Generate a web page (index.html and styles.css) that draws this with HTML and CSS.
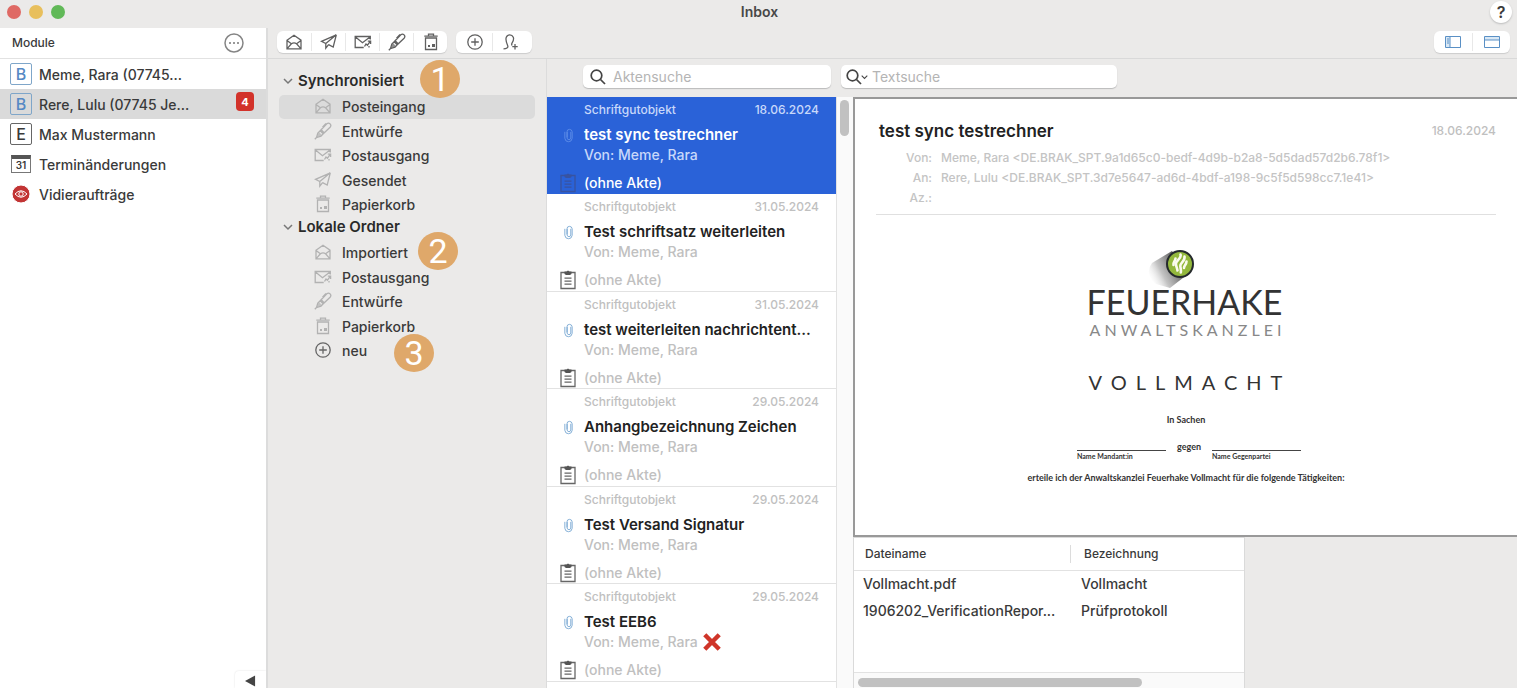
FILE: index.html
```html
<!DOCTYPE html>
<html lang="de">
<head>
<meta charset="utf-8">
<title>Inbox</title>
<link rel="stylesheet" href="styles.css">
</head>
<body>
<svg class="sprite" aria-hidden="true">
  <symbol id="i-inbox" viewBox="0 0 18 18"><path d="M2 7.200 9 2.200l7 5v8.600H2zM2 7.500l4.400 3.300M16 7.500l-4.400 3.300M2.200 15.600l4.200-4.800q2.600-2 5.200 0l4.200 4.800"/></symbol>
  <symbol id="i-send" viewBox="0 0 18 18"><path d="M16.300 1.800 1.500 8.300l4.300 2.200zM16.300 1.800 13.200 14l-4.600-2.300M16.300 1.800 5.800 10.500v4.700l2.800-3.500"/></symbol>
  <symbol id="i-out" viewBox="0 0 18 18"><path d="M16.300 6.500V3.500H1.200v11h8.500M1.200 3.700l7.300 6 7.800-6M10.500 13.500l1.500-2.500 1.400 1.200 3-4M13.800 8.200h2.800v2.800M15 14.500v-1.500"/></symbol>
  <symbol id="i-pen" viewBox="0 0 18 18"><path d="m6.200 8.800 6.600-7q1.700-1.400 3.300.1 1.500 1.700 0 3.300L9.200 11.800zM6.200 8.800 3.800 11l-1.300 4.500L7 14.200l2.200-2.400M7.200 7.700 9.800 10.500M2.500 15.500.8 17.200M8.500 5.200 12 1.500"/><path class="solid" d="m5.200 10.300 2.600 2.600-1.200 1.200-3.700 1.100 1.100-3.700z" opacity=".7"/></symbol>
  <symbol id="i-bin" viewBox="0 0 18 18"><path d="M3.500 5h11v11.500h-11zM2.300 3.200h13.400M6.500 3V1.200h5V3"/><path class="solid" d="M6 12h2v2H6zM10 11h3v3h-3z"/></symbol>
  <symbol id="i-plus" viewBox="0 0 18 18"><circle cx="9" cy="9" r="7.200"/><path d="M9 5.200v7.600M5.200 9h7.600"/></symbol>
  <symbol id="i-user" viewBox="0 0 18 18"><path d="M2.500 15.800c3 0 4.800-1 4.300-2.900C5.500 10 4.200 7 5.300 4.300c1.300-3.300 5.600-3.300 7 0 1 2.600-.3 4.300-1.400 6-.5 1-.3 1.600.3 2.100M14 11v5.400M11.300 13.700h5.400"/></symbol>
  <symbol id="i-chevron" viewBox="0 0 10 10"><path d="m1 3 4 4 4-4"/></symbol>
  <symbol id="i-search" viewBox="0 0 18 18"><circle cx="7.500" cy="7.500" r="5.300"/><path d="m11.500 11.500 4.500 4.500"/></symbol>
  <symbol id="i-clip" viewBox="0 0 12 16"><path d="M8.500 4v6.800q-.3 1.700-2 1.700t-2-1.700V4.200M2 4v7q.4 3.800 4 3.800t4-3.800V4q-.3-2.700-3-2.700T4.400 4v6"/></symbol>
  <symbol id="i-note" viewBox="0 0 18 20"><path d="M2 2.500h14v16H2zM5.500 8.200h7M5.500 11.200h7M5.500 14.200h7"/><path class="solid" d="M5.500 1.500h2L9 .5l1.500 1h2V4l-1.500 1H7L5.500 4z"/></symbol>
</svg>

<div class="window">
  <header class="titlebar">
    <div class="lights"><span class="light red"></span><span class="light yellow"></span><span class="light green"></span></div>
    <h1 class="title">Inbox</h1>
    <button class="help" aria-label="Hilfe">?</button>
  </header>

  <div class="shell">
    <aside class="modules">
      <div class="modules-head">
        <h2>Module</h2>
        <button class="more" aria-label="Mehr"><svg viewBox="0 0 20 20"><circle class="ring" cx="10" cy="10" r="9"/><circle cx="6" cy="10" r="1"/><circle cx="10" cy="10" r="1"/><circle cx="14" cy="10" r="1"/></svg></button>
      </div>
      <ul class="module-list">
        <li class="module"><span class="letter blue">B</span><span class="name">Meme, Rara (07745...</span></li>
        <li class="module active"><span class="letter blue">B</span><span class="name">Rere, Lulu (07745 Je...</span><span class="count">4</span></li>
        <li class="module"><span class="letter">E</span><span class="name">Max Mustermann</span></li>
        <li class="module"><span class="calendar">31</span><span class="name">Terminänderungen</span></li>
        <li class="module"><svg class="eye" viewBox="0 0 22 22"><circle cx="11" cy="11" r="9" fill="#c23434"/><path d="M5 11q6-6.500 12 0-6 6.500-12 0z"/><circle cx="11" cy="11" r="2.200"/></svg><span class="name">Vidieraufträge</span></li>
      </ul>
      <button class="collapse" aria-label="Einklappen"><svg viewBox="0 0 12 12"><path d="M11 0v12L0 6z"/></svg></button>
    </aside>

    <div class="work">
      <div class="toolbar">
        <div class="group">
          <button aria-label="Posteingang"><svg class="icon"><use href="#i-inbox"/></svg></button>
          <button aria-label="Senden"><svg class="icon"><use href="#i-send"/></svg></button>
          <button aria-label="Postausgang"><svg class="icon"><use href="#i-out"/></svg></button>
          <button aria-label="Entwurf"><svg class="icon"><use href="#i-pen"/></svg></button>
          <button aria-label="Papierkorb"><svg class="icon"><use href="#i-bin"/></svg></button>
        </div>
        <div class="group create">
          <button aria-label="Neu"><svg class="icon"><use href="#i-plus"/></svg></button>
          <button aria-label="Kontakt hinzufügen"><svg class="icon"><use href="#i-user"/></svg></button>
        </div>
        <div class="group views">
          <button aria-label="Seitenleiste"><svg class="view" viewBox="0 0 16 12"><path class="tint" d="M1 1h4v10H1z"/><path d="M.5.500h15v11H.5zM5 1v10M2 3h2M2 5h2M2 7h2"/></svg></button>
          <button aria-label="Kopfbereich"><svg class="view" viewBox="0 0 16 12"><path class="tint" d="M1 1h14v3H1z"/><path d="M.5.500h15v11H.5zM1 4h14"/></svg></button>
        </div>
      </div>

      <div class="content">
        <nav class="folders">
          <h3 class="folder-head"><svg class="chev"><use href="#i-chevron"/></svg>Synchronisiert<span class="marker first">1</span></h3>
          <ul>
            <li class="folder active"><svg class="icon"><use href="#i-inbox"/></svg>Posteingang</li>
            <li class="folder"><svg class="icon"><use href="#i-pen"/></svg>Entwürfe</li>
            <li class="folder"><svg class="icon"><use href="#i-out"/></svg>Postausgang</li>
            <li class="folder"><svg class="icon"><use href="#i-send"/></svg>Gesendet</li>
            <li class="folder"><svg class="icon"><use href="#i-bin"/></svg>Papierkorb</li>
          </ul>
          <h3 class="folder-head"><svg class="chev"><use href="#i-chevron"/></svg>Lokale Ordner</h3>
          <ul>
            <li class="folder"><svg class="icon"><use href="#i-inbox"/></svg>Importiert<span class="marker second">2</span></li>
            <li class="folder"><svg class="icon"><use href="#i-out"/></svg>Postausgang</li>
            <li class="folder"><svg class="icon"><use href="#i-pen"/></svg>Entwürfe</li>
            <li class="folder"><svg class="icon"><use href="#i-bin"/></svg>Papierkorb</li>
            <li class="folder new"><svg class="icon"><use href="#i-plus"/></svg>neu<span class="marker third">3</span></li>
          </ul>
        </nav>

        <main class="mail">
          <div class="searches">
            <label class="search"><svg class="glass"><use href="#i-search"/></svg><input type="text" placeholder="Aktensuche" aria-label="Aktensuche"></label>
            <label class="search text-search"><svg class="glass"><use href="#i-search"/></svg><svg class="chev dark"><use href="#i-chevron"/></svg><input type="text" placeholder="Textsuche" aria-label="Textsuche"></label>
          </div>
          <div class="panes">
            <ul class="messages">
              <li class="message active">
                <span class="kind">Schriftgutobjekt</span><time>18.06.2024</time>
                <svg class="clip"><use href="#i-clip"/></svg><strong>test sync testrechner</strong>
                <span class="from">Von: Meme, Rara</span>
                <svg class="note"><use href="#i-note"/></svg><span class="file">(ohne Akte)</span>
              </li>
              <li class="message">
                <span class="kind">Schriftgutobjekt</span><time>31.05.2024</time>
                <svg class="clip"><use href="#i-clip"/></svg><strong>Test schriftsatz weiterleiten</strong>
                <span class="from">Von: Meme, Rara</span>
                <svg class="note"><use href="#i-note"/></svg><span class="file">(ohne Akte)</span>
              </li>
              <li class="message">
                <span class="kind">Schriftgutobjekt</span><time>31.05.2024</time>
                <svg class="clip"><use href="#i-clip"/></svg><strong>test weiterleiten nachrichtent...</strong>
                <span class="from">Von: Meme, Rara</span>
                <svg class="note"><use href="#i-note"/></svg><span class="file">(ohne Akte)</span>
              </li>
              <li class="message">
                <span class="kind">Schriftgutobjekt</span><time>29.05.2024</time>
                <svg class="clip"><use href="#i-clip"/></svg><strong>Anhangbezeichnung Zeichen</strong>
                <span class="from">Von: Meme, Rara</span>
                <svg class="note"><use href="#i-note"/></svg><span class="file">(ohne Akte)</span>
              </li>
              <li class="message">
                <span class="kind">Schriftgutobjekt</span><time>29.05.2024</time>
                <svg class="clip"><use href="#i-clip"/></svg><strong>Test Versand Signatur</strong>
                <span class="from">Von: Meme, Rara</span>
                <svg class="note"><use href="#i-note"/></svg><span class="file">(ohne Akte)</span>
              </li>
              <li class="message">
                <span class="kind">Schriftgutobjekt</span><time>29.05.2024</time>
                <svg class="clip"><use href="#i-clip"/></svg><strong>Test EEB6</strong>
                <span class="from">Von: Meme, Rara <svg class="cross" viewBox="0 0 18 18"><path d="m2.500 2.500 13 13M15.500 2.500l-13 13"/></svg></span>
                <svg class="note"><use href="#i-note"/></svg><span class="file">(ohne Akte)</span>
              </li>
            </ul>
            <div class="vscroll"><span></span></div>

            <section class="reader">
              <article class="preview">
                <header class="subject"><h2>test sync testrechner</h2><time>18.06.2024</time></header>
                <dl class="meta">
                  <dt>Von:</dt><dd>Meme, Rara &lt;DE.BRAK_SPT.9a1d65c0-bedf-4d9b-b2a8-5d5dad57d2b6.78f1&gt;</dd>
                  <dt>An:</dt><dd>Rere, Lulu &lt;DE.BRAK_SPT.3d7e5647-ad6d-4bdf-a198-9c5f5d598cc7.1e41&gt;</dd>
                  <dt>Az.:</dt><dd></dd>
                </dl>
                <div class="document">
                  <svg class="logo" viewBox="0 0 60 44">
                    <defs><linearGradient id="shade" x1="1" y1="0.300" x2="0" y2="0.800"><stop offset="0.200" stop-color="#555"/><stop offset="0.650" stop-color="#aaa" stop-opacity="0.700"/><stop offset="1" stop-color="#fff" stop-opacity="0"/></linearGradient></defs>
                    <path d="M38 5 18 17Q10 28 22 38L36 42 54 28z" fill="url(#shade)"/>
                    <circle cx="46" cy="18" r="13" fill="#93b83c" stroke="#252a2c" stroke-width="2"/>
                    <g fill="none" stroke="#fbfbef" stroke-width="2.600" stroke-linecap="round"><path d="M46.500 8.500c1.500 4-5 6-4.500 10 .2 2.500 1.300 4 1.500 6"/><path d="M50.500 10.500c1 4.500-4.500 6-4.200 9.500.2 2.500 1 4 .5 6.500"/><path d="M52.500 15.500c0 3-2.500 4-2.500 6.500M41.500 12.500c0 2.500-2.500 3.500-2 6.500"/></g>
                  </svg>
                  <p class="brand">FEUERHAKE</p>
                  <p class="brand-sub">ANWALTSKANZLEI</p>
                  <h3 class="doc-title">VOLLMACHT</h3>
                  <p class="doc-text">In Sachen</p>
                  <div class="parties"><span class="party">Name Mandant:in</span><span class="versus">gegen</span><span class="party">Name Gegenpartei</span></div>
                  <p class="doc-text">erteile ich der Anwaltskanzlei Feuerhake Vollmacht für die folgende Tätigkeiten:</p>
                </div>
              </article>
              <div class="attachments">
                <table>
                  <thead><tr><th>Dateiname</th><th>Bezeichnung</th></tr></thead>
                  <tbody>
                    <tr><td>Vollmacht.pdf</td><td>Vollmacht</td></tr>
                    <tr><td>1906202_VerificationRepor...</td><td>Prüfprotokoll</td></tr>
                  </tbody>
                </table>
                <div class="hscroll"><span></span></div>
              </div>
            </section>
          </div>
        </main>
      </div>
    </div>
  </div>
</div>
</body>
</html>
```

FILE: styles.css
```css
* { box-sizing: border-box; }
body { margin: 0; background: #fff; color: #3a3a3a; font-family: Inter, "Liberation Sans", sans-serif; font-size: 14px; font-weight: 500; line-height: 20px; }
h1, h2, h3, p, ul, dl, dd { margin: 0; padding: 0; }
ul { list-style: none; }
button { border: 0; padding: 0; background: none; font: inherit; color: inherit; }
svg { display: block; flex: none; }
.sprite { position: absolute; width: 0; height: 0; }
symbol .solid { fill: currentColor; stroke: none; }

.window { display: flex; flex-direction: column; height: 100vh; margin-right: 3px; overflow: hidden; background: #ebeae9; }
.titlebar { display: grid; grid-template-columns: 1fr auto 1fr; align-items: center; flex: none; height: 28px; padding: 0 5px 4px 7px; }
.lights { display: flex; gap: 8px; }
.light { width: 14px; height: 14px; border-radius: 50%; }
.red { background: #df6964; }
.yellow { background: #e8bf5c; }
.green { background: #61b958; }
.title { font-size: 14px; font-weight: 600; color: #484848; }
.help { justify-self: end; width: 22px; height: 22px; border-radius: 50%; background: #fff; box-shadow: 0 1px 2px #bbb; font-size: 16px; font-weight: 600; }

.shell { display: flex; flex: 1; min-height: 0; }
.modules { display: flex; flex-direction: column; flex: none; width: 268px; background: #fff; border-right: 2px solid #dcdcdc; }
.modules-head { display: flex; align-items: center; justify-content: space-between; height: 31px; padding: 0 22px 0 12px; border-bottom: 1px solid #e2e2e2; }
.modules-head h2 { font-size: 12px; font-weight: 500; }
.more svg { width: 20px; height: 20px; fill: #777; }
.more .ring { fill: none; stroke: #858585; stroke-width: 1.500; }
.module { display: flex; align-items: center; gap: 7px; height: 30px; padding: 0 12px 0 10px; }
.module.active { background: #dadada; }
.name { padding-top: 2px; }
.letter { display: grid; place-items: center; width: 22px; height: 22px; border: 1px solid #666; border-radius: 2px; font-size: 16px; font-weight: 500; line-height: 18px; }
.letter.blue { border-color: #7fa6c9; color: #5689c4; }
.calendar { width: 20px; height: 18px; margin: 0 1px; border: 1px solid #777; border-top: 4px solid #555; font-size: 10px; font-weight: 600; line-height: 13px; text-align: center; }
.eye { width: 22px; height: 22px; fill: none; stroke: #fff; stroke-width: 1; }
.count { display: grid; place-items: center; width: 18px; height: 19px; margin: 0 0 5px auto; border-radius: 4px; background: #d2322a; color: #fff; font-size: 11px; font-weight: 700; }
.collapse { align-self: flex-end; display: grid; place-items: center; width: 31px; height: 17px; margin-top: auto; padding-top: 3px; border-radius: 4px 0 0 0; box-shadow: 0 0 2px #ddd; }
.collapse svg { width: 11px; height: 12px; fill: #444; }

.work { display: flex; flex-direction: column; flex: 1; min-width: 0; }
.toolbar { display: flex; gap: 9px; flex: none; height: 31px; padding: 3px 7px 5px 9px; border-bottom: 1px solid #d9d9d9; }
.group { display: flex; border-radius: 6px; background: #fff; box-shadow: 0 1px 1px #ccc; }
.group button { display: grid; place-items: center; width: 34px; margin: 2px 0; border-left: 1px solid #e8e8e8; }
.group button:first-child { border-left: 0; }
.group.create { padding: 0 5px 0 1px; }
.group.create button { width: 35px; }
.icon { width: 18px; height: 18px; fill: none; stroke: currentColor; stroke-width: 1.300; color: #606060; }
.group.views { margin-left: auto; }
.group.views button { width: 38px; }
.view { width: 16px; height: 12px; fill: none; stroke: #5a90c5; stroke-width: 1; }
.view .tint { fill: #d9e8f5; stroke: none; }

.content { display: flex; flex: 1; min-height: 0; }
.folders { flex: none; width: 278px; padding: 12px 11px; }
.folder-head { position: relative; display: flex; align-items: center; gap: 5px; width: max-content; height: 20px; padding-left: 4px; font-size: 15px; font-weight: 600; color: #2a2a2a; }
.chev { width: 10px; height: 10px; fill: none; stroke: #777; stroke-width: 1.500; }
.folder { position: relative; display: flex; align-items: center; gap: 10px; height: 24px; padding-left: 35px; border-radius: 5px; }
.folder:nth-child(even) { height: 25px; }
.folder.active { background: #dbdbdb; }
.folder .icon { margin-bottom: 2px; color: #b2b2b2; }
.folder.new .icon { color: #666; }
.folders ul { padding-top: 4px; }
.marker { position: absolute; z-index: 1; display: grid; place-items: center; width: 40px; height: 38px; border-radius: 50%; background: #dfa86a; color: #fff; font-family: Roboto, sans-serif; font-size: 34px; font-weight: 400; line-height: 38px; }
.first { left: 141px; top: -11px; }
.second { left: 139px; top: -9px; }
.third { left: 115px; top: -5px; }

.mail { display: flex; flex-direction: column; flex: 1; min-width: 0; }
.searches { display: flex; gap: 10px; flex: none; height: 38px; padding: 6px 0 9px 36px; border-left: 1px solid #dcdcdc; }
.search { display: flex; align-items: center; gap: 6px; width: 248px; padding: 0 6px; border-radius: 5px; background: #fff; box-shadow: 0 1px 1px #bbb; }
.text-search { width: 276px; gap: 0; padding-left: 4px; }
.search input { flex: 1; min-width: 0; border: 0; outline: 0; padding: 0; background: none; font: inherit; font-weight: 400; }
.search input::placeholder { color: #b4b4b4; }
.text-search input { margin-left: 4px; }
.glass { width: 18px; height: 18px; fill: none; stroke: #444; stroke-width: 1.700; }
.chev.dark { width: 7px; stroke: #444; margin-left: -2px; }

.panes { display: flex; flex: 1; min-height: 0; }
.messages { flex: none; width: 290px; overflow: hidden; background: #fff; border-left: 1px solid #dcdcdc; }
.message { display: grid; grid-template-columns: 20px 1fr auto; grid-template-rows: 18px 32px 8px 48px; column-gap: 6px; align-items: center; height: 97px; padding: 4px 17px 0 11px; border-bottom: 1px solid #e2e2e2; color: #c0c0c0; }
.message:nth-child(even) { height: 98px; }
.kind { grid-column: 2; font-size: 12px; }
.message time { grid-column: 3; font-size: 12px; }
.clip { grid-column: 1; justify-self: center; width: 11px; height: 15px; fill: none; stroke: #7aa9d3; stroke-width: 1; }
.message strong { grid-column: 2 / 4; font-size: 15px; font-weight: 600; color: #222; white-space: nowrap; }
.from { grid-column: 2 / 4; display: flex; align-items: center; gap: 4px; }
.note { grid-column: 1; justify-self: center; width: 18px; height: 20px; fill: none; stroke: #666; stroke-width: 1.300; color: #555; }
.message.active { border-color: #2a62d8; background: #2a62d8; color: #c8d8fa; }
.message.active strong, .message.active .file { color: #fff; }
.message.active .clip { stroke: #5e8de8; }
.message.active .note { stroke: #3853a0; color: #3853a0; }
.cross { width: 20px; height: 20px; stroke: #cf3529; stroke-width: 4; fill: none; }
.vscroll { flex: none; width: 17px; padding: 3px; background: #fafafa; border-left: 1px solid #e2e2e2; }
.vscroll span { display: block; width: 9px; height: 36px; border-radius: 5px; background: #c1c1c1; }

.reader { display: flex; flex-direction: column; flex: 1; min-width: 0; }
.preview { flex: none; height: 440px; padding: 22px 21px 0 21px; border: 2px solid #999; border-right: 0; background: #fff; }
.subject { display: flex; align-items: center; justify-content: space-between; padding-left: 3px; color: #c0c0c0; font-size: 12px; }
.subject h2 { font-size: 17px; font-weight: 600; color: #222; }
.meta { display: grid; grid-template-columns: 56px 1fr; grid-auto-rows: 20px; column-gap: 9px; padding: 7px 0 6px; border-bottom: 1px solid #e0e0e0; color: #c4c4c4; font-size: 12px; }
.meta dt { text-align: right; }
.document { display: flex; flex-direction: column; align-items: center; color: #333; font-family: Lato, sans-serif; }
.logo { width: 60px; height: 44px; margin: 31px 44px 0 0; }
.brand { padding-right: 3px; font-size: 34px; font-weight: 400; line-height: 24px; }
.brand-sub { margin-top: 8px; padding-left: 3px; color: #888; font-size: 16px; font-weight: 400; line-height: 16px; letter-spacing: 4px; }
.doc-title { margin-top: 32px; padding-left: 8px; font-size: 20px; font-weight: 400; line-height: 24px; letter-spacing: 9px; }
.doc-text { margin-top: 19px; font-size: 9px; font-weight: 700; line-height: 14px; }
.parties { display: flex; gap: 11px; margin-top: 13px; padding-left: 6px; font-size: 9px; font-weight: 700; line-height: 14px; }
.party { width: 89px; margin-top: 10px; border-top: 1px solid #444; font-size: 7px; line-height: 10px; }
.parties + .doc-text { margin-top: 10px; }

.attachments { display: flex; flex-direction: column; flex: 1; width: 392px; min-height: 0; border: 1px solid #dadada; border-bottom: 0; background: #fff; }
table { width: 100%; border-collapse: collapse; table-layout: fixed; }
th { height: 32px; padding: 0 14px 0 11px; border-bottom: 1px solid #e2e2e2; font-size: 12px; font-weight: 500; text-align: left; }
th:first-child { width: 216px; }
td { height: 27px; padding: 0 11px; white-space: nowrap; }
th + th { padding-left: 14px; background: linear-gradient(#dcdcdc, #dcdcdc) 0 50% / 1px 18px no-repeat; }
td:first-child { padding: 0 9px; }
.hscroll { height: 16px; margin-top: auto; padding: 5px 4px; border-top: 1px solid #e2e2e2; background: #fafafa; }
.hscroll span { display: block; width: 284px; height: 9px; border-radius: 5px; background: #c1c1c1; }
```
